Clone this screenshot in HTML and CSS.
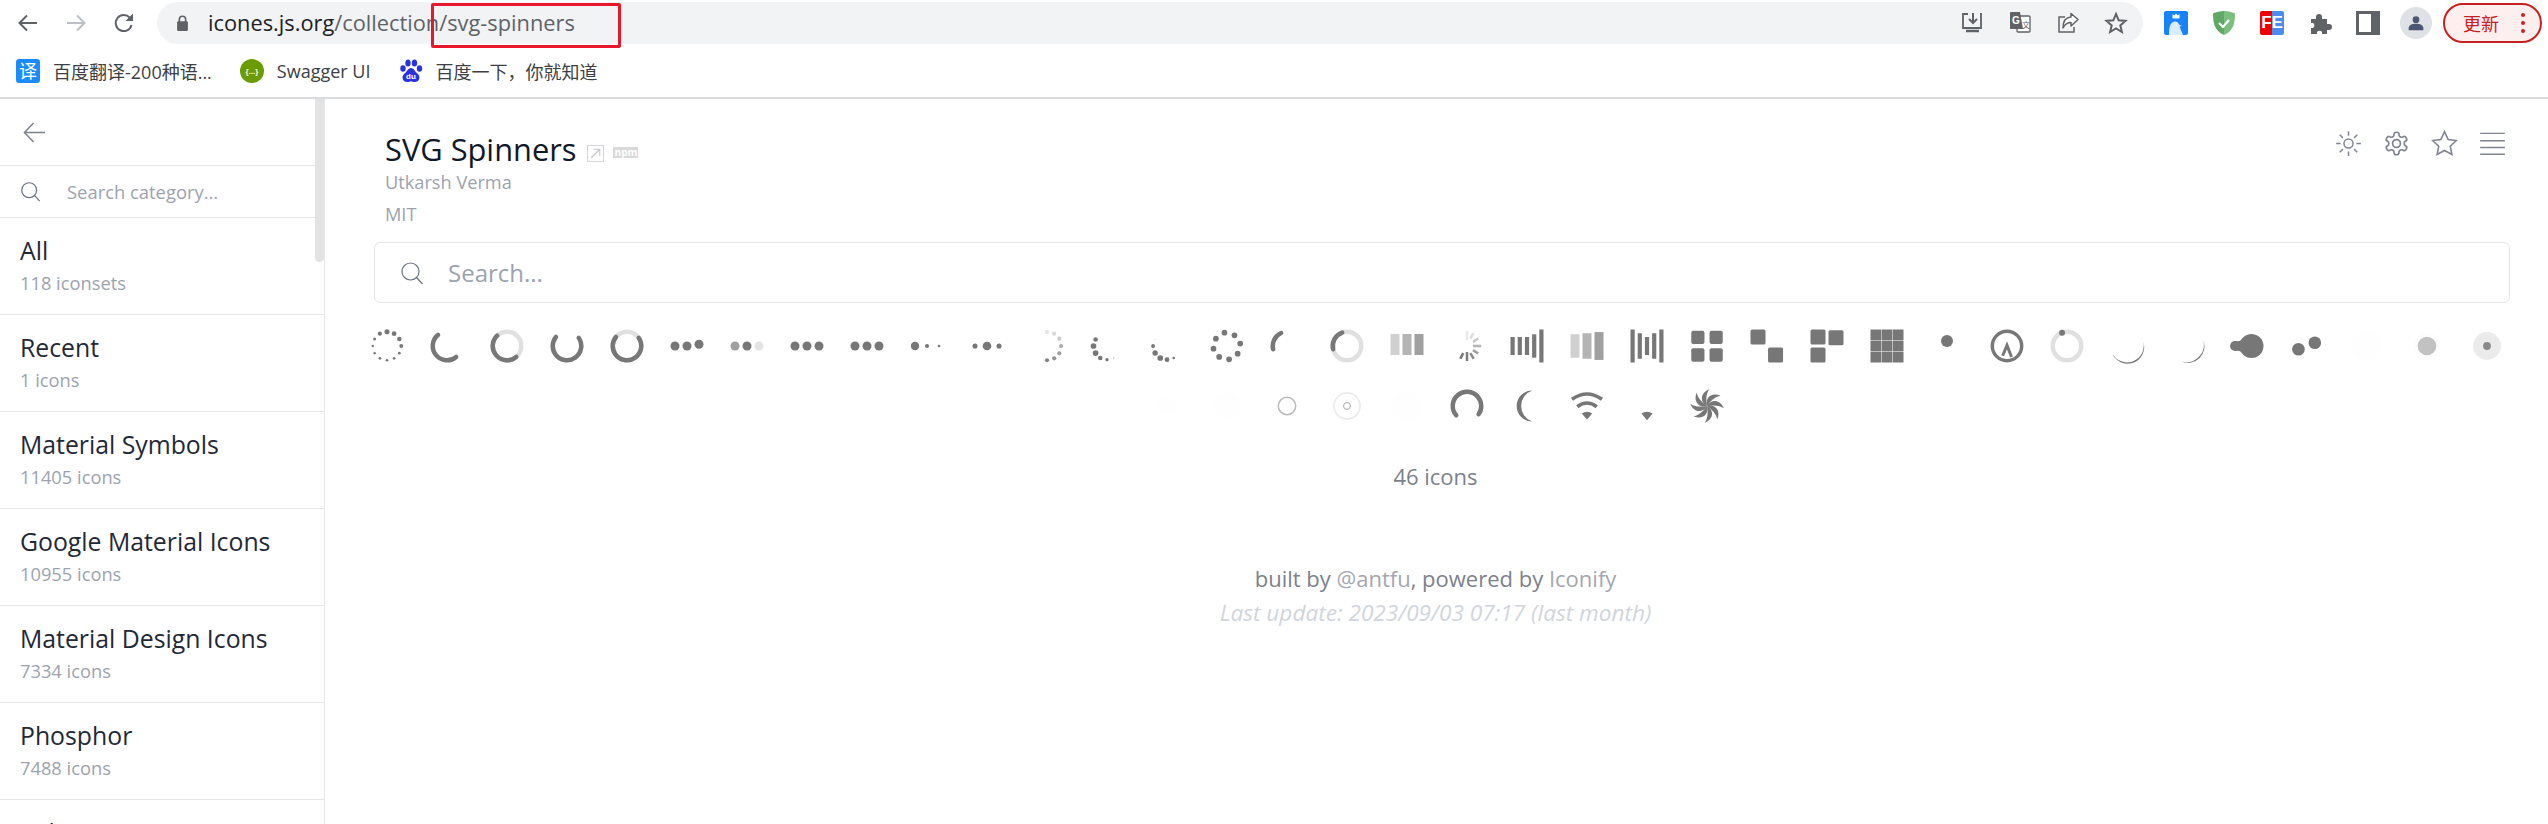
FILE: index.html
```html
<!DOCTYPE html>
<html>
  <head>
    <meta charset="UTF-8">
    <title>SVG Spinners - Icones</title>
    <link rel="stylesheet" href="styles.css">
  </head>
  <body>
    <div class="browser">
      <div class="toolbar">
        <div class="nav">
          <svg class="tool" viewBox="0 0 24 24"><path d="M21 12H4M11 4.5 3.5 12l7.5 7.5" fill="none" stroke="#5f6368" stroke-width="2"/></svg>
          <svg class="tool" viewBox="0 0 24 24"><path d="M3 12h17M13 4.5l7.5 7.5-7.5 7.5" fill="none" stroke="#bcbfc3" stroke-width="2"/></svg>
          <svg class="tool" viewBox="0 0 24 24"><path d="M19.5 14a8 8 0 1 1-1.8-7.3L20 9" fill="none" stroke="#5f6368" stroke-width="2"/><path d="M21 2.5V10h-7.500z" fill="#5f6368"/></svg>
        </div>
        <div class="omnibox">
          <svg class="lock" viewBox="0 0 16 20"><path d="M4.5 9V6a3.5 3.5 0 0 1 7 0v3" fill="none" stroke="#5f6368" stroke-width="1.8"/><rect x="2" y="8" width="12" height="11" rx="1.5" fill="#5f6368"/></svg>
          <span class="url"><b>icones.js.org</b>/collection/svg-spinners</span>
          <div class="omni-actions">
            <svg class="omni-icon" viewBox="0 0 24 24"><path d="M8 3H3v14h18V3h-1" fill="none" stroke="#5f6368" stroke-width="1.8"/><path d="M6 20h13" stroke="#5f6368" stroke-width="2.5"/><path d="M13 2v9M9 8l4 4 4-4" fill="none" stroke="#5f6368" stroke-width="2"/></svg>
            <svg class="omni-icon" viewBox="0 0 24 24"><rect x="9" y="5" width="13" height="16" rx="1" fill="#fff" stroke="#5f6368" stroke-width="1.3"/><path d="M3 1h9l3 17H3a1 1 0 0 1-1-1V2a1 1 0 0 1 1-1z" fill="#5f6368"/><text x="4" y="13" class="g-mark">G</text><text x="14" y="17" class="x-mark">文</text></svg>
            <svg class="omni-icon" viewBox="0 0 24 24"><path d="M9 6H3v15h15v-5" fill="none" stroke="#5f6368" stroke-width="1.5"/><path d="M22 8.5 15 2.5V6C9 6.500 7 11 7 17c2-4 4.500-5.500 8-5.500V15z" fill="#fff" stroke="#5f6368" stroke-width="1.5" stroke-linejoin="round"/></svg>
            <svg class="omni-icon" viewBox="0 0 24 24"><path d="m12 3 2.7 6.3 6.8.6-5.200 4.500 1.600 6.600-5.900-3.500L6.100 21l1.600-6.600-5.200-4.500 6.800-.6z" fill="none" stroke="#5f6368" stroke-width="2"/></svg>
          </div>
        </div>
        <div class="extensions">
          <svg class="ext" viewBox="0 0 24 24"><rect width="24" height="24" rx="2" fill="#1682fb"/><path d="M5 24C5 16 6 11.500 10.500 10.500c2.500-.5 4 1 4.500 3l3 1.500-2.500.5L19 24z" fill="#dcecff"/><path d="M8.500 3l1.700 1.500L12 2.500l1.800 2L15.500 3v4.500h-7z" fill="#fff"/></svg>
          <svg class="ext" viewBox="0 0 24 24"><path d="M12 0c4 0 8 1 11 2.500 0 9-1 17-11 21.500z" fill="#7abf7e"/><path d="M12 0C8 0 4 1 1 2.500 1 11.500 2 19.500 12 24z" fill="#5fa865"/><path d="m7 12 4 4 6-7" fill="none" stroke="#fff" stroke-width="2.200"/></svg>
          <div class="fe">FE</div>
          <svg class="ext" viewBox="0 0 24 24"><path d="M3 8h5V6a3 3 0 0 1 6 0v2h5v5h2a3 3 0 0 1 0 6h-2v4h-5v-2a3 3 0 0 0-5 0v2H3v-6h2a3 3 0 0 0 0-5H3z" fill="#5f6368"/></svg>
          <svg class="ext" viewBox="0 0 24 24"><path fill-rule="evenodd" d="M0 0h24v24H0zM3 3v18h12V3z" fill="#5f6368"/></svg>
          <div class="avatar"><svg viewBox="0 0 24 24"><circle cx="12" cy="7" r="5" fill="#4a5672"/><path d="M1 23v-3c0-5 5-7 11-7s11 2 11 7v3z" fill="#4a5672"/></svg></div>
        </div>
        <div class="update">
          <span>更新</span>
          <i class="dots"><u></u><u></u><u></u></i>
        </div>
      </div>
      <div class="bookmarks">
        <a class="mark"><span class="fav-fanyi">译</span>百度翻译-200种语...</a>
        <a class="mark"><svg class="fav" viewBox="0 0 24 24"><circle cx="12" cy="12" r="12" fill="#6a9c00"/><text x="12" y="15" class="brace">{...}</text></svg>Swagger UI</a>
        <a class="mark"><svg class="fav" viewBox="0 0 24 24"><ellipse cx="4" cy="9.5" rx="2.7" ry="3.3" fill="#2932e1"/><ellipse cx="9" cy="4" rx="2.7" ry="3.5" fill="#2932e1"/><ellipse cx="15.5" cy="4" rx="2.7" ry="3.5" fill="#2932e1"/><ellipse cx="20.5" cy="9.5" rx="2.7" ry="3.3" fill="#2932e1"/><path d="M12 9c3 0 4 4 7 6 3 3 1 8-3 8-2 0-3-.8-4-.8s-2 .8-4 .8c-4 0-6-5-3-8 3-2 4-6 7-6z" fill="#2932e1"/><text x="12" y="20" class="du">du</text></svg>百度一下，你就知道</a>
      </div>
      <div class="annotation"></div>
    </div>

    <div class="page">
      <aside class="side">
        <div class="side-thumb"></div>
        <div class="side-back">
          <svg class="back-arrow" viewBox="0 0 24 24"><path d="M23 12H1.5M11 2 1.5 12l9.500 10" fill="none" stroke="#7b808c" stroke-width="1.5"/></svg>
        </div>
        <div class="side-search">
          <svg class="search-small" viewBox="0 0 24 24"><circle cx="10.5" cy="10.5" r="8.5" fill="none" stroke="#6b7280" stroke-width="1.4"/><path d="m16.5 16.5 6 6.500" stroke="#6b7280" stroke-width="1.4"/></svg>
          <span>Search category...</span>
        </div>
        <div class="item"><div class="item-name">All</div><div class="item-count">118 iconsets</div></div>
        <div class="item"><div class="item-name">Recent</div><div class="item-count">1 icons</div></div>
        <div class="item"><div class="item-name">Material Symbols</div><div class="item-count">11405 icons</div></div>
        <div class="item"><div class="item-name">Google Material Icons</div><div class="item-count">10955 icons</div></div>
        <div class="item"><div class="item-name">Material Design Icons</div><div class="item-count">7334 icons</div></div>
        <div class="item"><div class="item-name">Phosphor</div><div class="item-count">7488 icons</div></div>
        <div class="item"><div class="item-name">Solar</div></div>
      </aside>

      <main class="main">
        <div class="head">
          <div class="head-info">
            <div class="title-row">
              <h1>SVG Spinners</h1>
              <svg class="ext-link" viewBox="0 0 16 16"><rect x=".5" y=".5" width="15" height="15" fill="none" stroke="#d4d6da"/><path d="M4 12 12 4M6 4h6v6" fill="none" stroke="#c4c6cb"/></svg>
              <span class="npm">npm</span>
            </div>
            <div class="author">Utkarsh Verma</div>
            <div class="license">MIT</div>
          </div>
          <div class="head-actions">
            <svg class="action" viewBox="0 0 24 24"><g fill="none" stroke="#80848f" stroke-width="1.3"><circle cx="12" cy="12" r="4"/><path d="M12 1v4M12 19v4M1 12h4M19 12h4M4.200 4.200 7 7M17 17l2.800 2.800M4.200 19.800 7 17M17 7l2.800-2.800"/></g></svg>
            <svg class="action" viewBox="0 0 24 24"><g fill="none" stroke="#80848f" stroke-width="1.5"><path d="M12.220 2h-.44a2 2 0 0 0-2 2v.18a2 2 0 0 1-1 1.730l-.43.25a2 2 0 0 1-2 0l-.15-.08a2 2 0 0 0-2.730.730l-.22.380a2 2 0 0 0 .730 2.730l.15.1a2 2 0 0 1 1 1.720v.51a2 2 0 0 1-1 1.740l-.15.09a2 2 0 0 0-.730 2.730l.22.380a2 2 0 0 0 2.730.730l.15-.08a2 2 0 0 1 2 0l.43.25a2 2 0 0 1 1 1.730V20a2 2 0 0 0 2 2h.44a2 2 0 0 0 2-2v-.18a2 2 0 0 1 1-1.730l.43-.25a2 2 0 0 1 2 0l.15.08a2 2 0 0 0 2.730-.730l.22-.39a2 2 0 0 0-.730-2.730l-.15-.08a2 2 0 0 1-1-1.740v-.5a2 2 0 0 1 1-1.740l.15-.09a2 2 0 0 0 .730-2.730l-.22-.380a2 2 0 0 0-2.730-.730l-.15.08a2 2 0 0 1-2 0l-.43-.25a2 2 0 0 1-1-1.730V4a2 2 0 0 0-2-2z"/><circle cx="12" cy="12" r="3.5"/></g></svg>
            <svg class="action" viewBox="0 0 24 24"><path d="m12 1.500 3.200 6.900 7.300.9-5.400 5.100 1.500 7.400L12 18.200l-6.600 3.600 1.500-7.400-5.400-5.100 7.300-.9z" fill="none" stroke="#80848f" stroke-width="1.4"/></svg>
            <svg class="action" viewBox="0 0 24 24"><path d="M1 3h22M1 9.500h22M1 15.500h22M1 21.500h22" stroke="#80848f" stroke-width="1.3"/></svg>
          </div>
        </div>

        <div class="search-box">
          <svg class="search-big" viewBox="0 0 24 24"><circle cx="10.5" cy="10.5" r="8.5" fill="none" stroke="#6b7280" stroke-width="1.2"/><path d="m16.5 16.5 6 6.500" stroke="#6b7280" stroke-width="1.2"/></svg>
          <span>Search...</span>
        </div>

        <div class="icon-grid">
          <div class="cell"><svg class="spin" viewBox="0 0 24 24"><circle cx="12" cy="2.5" r="1.7"/><circle cx="16.75" cy="3.77" r="1.6"/><circle cx="20.23" cy="7.25" r="1.5"/><circle cx="21.5" cy="12" r="1.3"/><circle cx="20.23" cy="16.75" r=".9"/><circle cx="16.75" cy="20.23" r=".9"/><circle cx="12" cy="21.5" r=".9"/><circle cx="7.25" cy="20.23" r=".9"/><circle cx="3.77" cy="16.75" r=".8"/><circle cx="2.5" cy="12" r=".8"/><circle cx="3.77" cy="7.25" r="1"/><circle cx="7.25" cy="3.77" r="1.4"/></svg></div>
          <div class="cell"><svg class="spin" viewBox="0 0 24 24"><circle class="arc" cx="12" cy="12" r="9.5" pathLength="360" stroke-dasharray="181 360" transform="rotate(50 12 12)"/></svg></div>
          <div class="cell"><svg class="spin" viewBox="0 0 24 24"><circle class="ring" cx="12" cy="12" r="9.5"/><circle class="arc" cx="12" cy="12" r="9.5" pathLength="360" stroke-dasharray="176 360" transform="rotate(50 12 12)"/></svg></div>
          <div class="cell"><svg class="spin" viewBox="0 0 24 24"><circle class="arc" cx="12" cy="12" r="9.5" pathLength="360" stroke-dasharray="254 360" transform="rotate(-35 12 12)"/></svg></div>
          <div class="cell"><svg class="spin" viewBox="0 0 24 24"><circle class="ring" cx="12" cy="12" r="9.5"/><circle class="arc" cx="12" cy="12" r="9.5" pathLength="360" stroke-dasharray="254 360" transform="rotate(-35 12 12)"/></svg></div>
          <div class="cell"><svg class="spin" viewBox="0 0 24 24"><circle cx="4" cy="12" r="3"/><circle cx="12" cy="12" r="3"/><circle cx="20" cy="10.8" r="3"/></svg></div>
          <div class="cell"><svg class="spin" viewBox="0 0 24 24"><circle cx="4" cy="12" r="3" opacity=".7"/><circle cx="12" cy="12" r="3"/><circle cx="20" cy="12" r="3" opacity=".2"/></svg></div>
          <div class="cell"><svg class="spin" viewBox="0 0 24 24"><circle cx="4" cy="12" r="3"/><circle cx="12" cy="12" r="3"/><circle cx="20" cy="12" r="3"/></svg></div>
          <div class="cell"><svg class="spin" viewBox="0 0 24 24"><circle cx="4" cy="12" r="3"/><circle cx="12" cy="12" r="3"/><circle cx="20" cy="12" r="3"/></svg></div>
          <div class="cell"><svg class="spin" viewBox="0 0 24 24"><circle cx="4" cy="12" r="2.8"/><circle cx="12" cy="12" r="1.4"/><circle cx="20" cy="12" r=".9"/></svg></div>
          <div class="cell"><svg class="spin" viewBox="0 0 24 24"><circle cx="4" cy="12" r="1.7"/><circle cx="12" cy="12" r="2.9"/><circle cx="20" cy="12" r="1.7"/></svg></div>
          <div class="cell"><svg class="spin" viewBox="0 0 24 24"><circle cx="12" cy="2.7" r="1.4" opacity=".2"/><circle cx="16.8" cy="3.8" r="1.4" opacity=".3"/><circle cx="20.2" cy="7.1" r="1.4" opacity=".4"/><circle cx="21.4" cy="12" r="1.4" opacity=".6"/><circle cx="20.2" cy="16.9" r="1.4" opacity=".7"/><circle cx="16.8" cy="20.2" r="1.4" opacity=".8"/><circle cx="12" cy="21.5" r="1.4" opacity=".9"/></svg></div>
          <div class="cell"><svg class="spin" viewBox="0 0 24 24"><circle cx="4.4" cy="7.6" r="1.5"/><circle cx="3" cy="12" r="1.9"/><circle cx="4.4" cy="16.7" r="1.9"/><circle cx="7.5" cy="20" r="1.5"/><circle cx="12" cy="21.1" r="1.1"/><circle cx="16.5" cy="20" r=".4"/></svg></div>
          <div class="cell"><svg class="spin" viewBox="0 0 24 24"><circle cx="4.1" cy="7.6" r=".2"/><circle cx="2.7" cy="12" r="1.3"/><circle cx="4.1" cy="16.7" r="1.8"/><circle cx="7.5" cy="20" r="1.9"/><circle cx="12" cy="21.1" r="1.6"/><circle cx="16.5" cy="20" r=".9"/></svg></div>
          <div class="cell"><svg class="spin" viewBox="0 0 24 24"><circle cx="10.3" cy="3.1" r="1.9"/><circle cx="17" cy="4.9" r="1.9"/><circle cx="20.8" cy="10.4" r="1.9"/><circle cx="19.1" cy="17.1" r="1.9"/><circle cx="13.4" cy="20.9" r="1.9"/><circle cx="6.8" cy="19.3" r="1.9"/><circle cx="3" cy="13.8" r="1.9"/><circle cx="4.6" cy="7.1" r="1.9"/></svg></div>
          <div class="cell"><svg class="spin" viewBox="0 0 24 24"><circle class="arc" cx="12" cy="12" r="9.5" pathLength="360" stroke-dasharray="78 360" transform="rotate(167 12 12)"/></svg></div>
          <div class="cell"><svg class="spin" viewBox="0 0 24 24"><circle class="ring" cx="12" cy="12" r="9.5"/><circle class="arc" cx="12" cy="12" r="9.5" pathLength="360" stroke-dasharray="83 360" transform="rotate(167 12 12)"/></svg></div>
          <div class="cell"><svg class="spin" viewBox="0 0 24 24"><rect x="1" y="4" width="6" height="14" opacity=".35"/><rect x="9" y="4" width="6" height="14" opacity=".55"/><rect x="17" y="4" width="6" height="14" opacity=".7"/></svg></div>
          <div class="cell"><svg class="spin" viewBox="0 0 24 24"><g stroke="#777" stroke-width="1.7"><path d="M12 2v6" opacity=".15"/><path d="m16.2 3.5-2 3.6" opacity=".25"/><path d="m19.5 7-3.5 2.2" opacity=".4"/><path d="M21.5 12H16" opacity=".55"/><path d="m19.5 17-3.5-2.2" opacity=".7"/><path d="m16.5 20.5-2.3-3.8" opacity=".85"/><path d="M12 22v-6" opacity=".95"/><path d="m7.5 20.5 2-3.8"/></g></svg></div>
          <div class="cell"><svg class="spin" viewBox="0 0 24 24"><rect x="1" y="6" width="2.8" height="12"/><rect x="5.8" y="6" width="2.8" height="12"/><rect x="10.6" y="6" width="2.8" height="12"/><rect x="15.4" y="4.2" width="2.8" height="15.6"/><rect x="20.2" y="1" width="2.8" height="22"/></svg></div>
          <div class="cell"><svg class="spin" viewBox="0 0 24 24"><rect x="1" y="4.2" width="6" height="15.6" opacity=".35"/><rect x="9" y="3.5" width="6" height="17" opacity=".55"/><rect x="17" y="2.7" width="6" height="18.6" opacity=".7"/></svg></div>
          <div class="cell"><svg class="spin" viewBox="0 0 24 24"><rect x="1" y="1" width="2.8" height="22"/><rect x="5.8" y="3.5" width="2.8" height="17"/><rect x="10.6" y="6" width="2.8" height="12"/><rect x="15.4" y="3.5" width="2.8" height="17"/><rect x="20.2" y="1" width="2.8" height="22"/></svg></div>
          <div class="cell"><svg class="spin" viewBox="0 0 24 24"><rect x="1.5" y="1.8" width="8.8" height="8.8" rx="1.3"/><rect x="13.7" y="1.8" width="8.8" height="8.8" rx="1.3"/><rect x="1.5" y="13.5" width="8.8" height="9" rx="1.3"/><rect x="13.7" y="13.5" width="8.8" height="9" rx="1.3"/></svg></div>
          <div class="cell"><svg class="spin" viewBox="0 0 24 24"><rect x="1" y="1" width="10" height="10" rx="1"/><rect x="12.7" y="13" width="10" height="10" rx="1"/></svg></div>
          <div class="cell"><svg class="spin" viewBox="0 0 24 24"><rect x="1" y="1" width="10" height="10" rx="1"/><rect x="13" y="1.5" width="10" height="10" rx="1"/><rect x="1" y="13" width="10" height="10" rx="1"/></svg></div>
          <div class="cell"><svg class="spin" viewBox="0 0 24 24"><rect x="1" y="1" width="7.13" height="7.13"/><rect x="8.43" y="1" width="7.13" height="7.13"/><rect x="15.87" y="1" width="7.13" height="7.13"/><rect x="1" y="8.43" width="7.13" height="7.13"/><rect x="8.43" y="8.43" width="7.13" height="7.13"/><rect x="15.87" y="8.43" width="7.13" height="7.13"/><rect x="1" y="15.87" width="7.13" height="7.13"/><rect x="8.43" y="15.87" width="7.13" height="7.13"/><rect x="15.87" y="15.87" width="7.13" height="7.13"/></svg></div>
          <div class="cell"><svg class="spin" viewBox="0 0 24 24"><circle cx="12" cy="8.7" r="4"/></svg></div>
          <div class="cell"><svg class="spin" viewBox="0 0 24 24"><circle cx="12" cy="12" r="9.8" fill="none" stroke="#777" stroke-width="2.3"/><path d="m9.1 18.5 2.9-7 3 7.8" fill="none" stroke="#777" stroke-width="2"/></svg></div>
          <div class="cell"><svg class="spin" viewBox="0 0 24 24"><circle class="ring" cx="12" cy="12" r="9.5"/><circle cx="8.7" cy="3.1" r="2"/></svg></div>
          <div class="cell"><svg class="spin" viewBox="0 0 24 24"><path d="M22.8 9A11 11 0 0 1 2 16.5 11.1 11.1 0 0 0 22.8 9z"/></svg></div>
          <div class="cell"><svg class="spin" viewBox="0 0 24 24"><path d="M22.8 8A11 11 0 0 1 8.5 22.4 11.7 11.7 0 0 0 22.8 8z"/></svg></div>
          <div class="cell"><svg class="spin" viewBox="0 0 24 24"><circle cx="15" cy="12" r="8"/><circle cx="4" cy="12" r="3.3"/><path d="M4 8.700Q8 9.500 10 6v12q-2-3.500-6-2.700z"/></svg></div>
          <div class="cell"><svg class="spin" viewBox="0 0 24 24"><circle cx="6.3" cy="14.2" r="4.2"/><circle cx="17.2" cy="9.8" r="4.2"/></svg></div>
          <div class="cell"><svg class="spin faint" viewBox="0 0 24 24"><circle cx="12" cy="12" r="10"/></svg></div>
          <div class="cell"><svg class="spin" viewBox="0 0 24 24"><circle cx="12" cy="12" r="9" fill="#fdfdfd"/><circle cx="12" cy="12" r="6.2" fill="#c2c2c2"/></svg></div>
          <div class="cell"><svg class="spin" viewBox="0 0 24 24"><circle cx="12" cy="12" r="9.3" fill="#ebebeb"/><circle cx="12" cy="12" r="2.6" fill="#8a8a8a"/></svg></div>

          <div class="cell"><svg class="spin faint" viewBox="0 0 24 24"><circle cx="12" cy="12" r="6"/></svg></div>
          <div class="cell"><svg class="spin faint" viewBox="0 0 24 24"><circle cx="12" cy="12" r="9"/></svg></div>
          <div class="cell"><svg class="spin" viewBox="0 0 24 24"><circle cx="12" cy="12" r="5.8" fill="none" stroke="#bbb"/></svg></div>
          <div class="cell"><svg class="spin" viewBox="0 0 24 24"><circle cx="12" cy="12" r="8.7" fill="none" stroke="#ececec" stroke-width="1.2"/><circle cx="12" cy="12" r="2.3" fill="none" stroke="#888" stroke-width=".5"/></svg></div>
          <div class="cell"><svg class="spin faint" viewBox="0 0 24 24"><circle cx="12" cy="12" r="10"/></svg></div>
          <div class="cell"><svg class="spin" viewBox="0 0 24 24"><circle class="arc" cx="12" cy="12" r="9.5" pathLength="360" stroke-dasharray="256 360" transform="rotate(139 12 12)"/></svg></div>
          <div class="cell"><svg class="spin" viewBox="0 0 24 24"><path d="M15.5 1.6A11 11 0 0 0 15.5 22.4 10.4 10.4 0 0 1 15.5 1.6z"/></svg></div>
          <div class="cell"><svg class="spin" viewBox="0 0 24 24"><path d="M2 7.500Q12 .5 22 7.500M5.500 12.500Q12 7.500 18.500 12.500" fill="none" stroke="#777" stroke-width="2.4"/><path d="M12 21 8.500 17Q12 14.500 15.500 17z"/></svg></div>
          <div class="cell"><svg class="spin" viewBox="0 0 24 24"><path d="M12 21.500 8.300 17Q12 14.800 15.700 17z"/></svg></div>
          <div class="cell"><svg class="spin" viewBox="0 0 24 24"><path d="M12 12C7.500 9.500 7 3.500 13.500 .8 11 4.500 11.500 8.500 12 12z"/><path d="M12 12C7.500 9.500 7 3.500 13.500 .8 11 4.500 11.500 8.500 12 12z" transform="rotate(45 12 12)"/><path d="M12 12C7.500 9.500 7 3.500 13.500 .8 11 4.500 11.500 8.500 12 12z" transform="rotate(90 12 12)"/><path d="M12 12C7.500 9.500 7 3.500 13.500 .8 11 4.500 11.500 8.500 12 12z" transform="rotate(135 12 12)"/><path d="M12 12C7.500 9.500 7 3.500 13.500 .8 11 4.500 11.500 8.500 12 12z" transform="rotate(180 12 12)"/><path d="M12 12C7.500 9.500 7 3.500 13.500 .8 11 4.500 11.500 8.500 12 12z" transform="rotate(225 12 12)"/><path d="M12 12C7.500 9.500 7 3.500 13.500 .8 11 4.500 11.500 8.500 12 12z" transform="rotate(270 12 12)"/><path d="M12 12C7.500 9.500 7 3.500 13.500 .8 11 4.500 11.500 8.500 12 12z" transform="rotate(315 12 12)"/></svg></div>
        </div>

        <div class="count">46 icons</div>
        <div class="footer">built by <a>@antfu</a>, powered by <a>Iconify</a></div>
        <div class="updated">Last update: 2023/09/03 07:17 (last month)</div>
      </main>
    </div>
  </body>
</html>
```

FILE: styles.css
```css
* {
  box-sizing: border-box;
}

html, body {
  margin: 0;
  height: 824px;
  overflow: hidden;
}

body {
  font-family: "Open Sans", "Noto Sans CJK SC", sans-serif;
  background: #fff;
  color: #111827;
  display: flex;
  flex-direction: column;
}

/* browser window */
.browser {
  position: relative;
  height: 99px;
  flex-shrink: 0;
  border-bottom: 2px solid #dadce0;
}

.toolbar {
  display: flex;
  align-items: center;
  height: 44px;
  padding: 1px 0 0 4px;
}

.nav {
  display: flex;
}

.tool {
  width: 24px;
  height: 24px;
  margin: 0 12px;
}

.omnibox {
  display: flex;
  align-items: center;
  width: 1986px;
  height: 42px;
  margin-left: 9px;
  padding: 0 3px 0 18px;
  background: #f1f3f4;
  border-radius: 21px;
}

.lock {
  width: 15px;
  height: 18px;
  margin-right: 18px;
}

.url {
  font-size: 21.8px;
  color: #5f6368;
  white-space: nowrap;
}

.url b {
  font-weight: 400;
  color: #202124;
}

.omni-actions {
  display: flex;
  margin-left: auto;
}

.omni-icon {
  width: 24px;
  height: 24px;
  margin: 0 12px;
}

.g-mark {
  font: 700 10px "Liberation Sans", sans-serif;
  fill: #fff;
}

.x-mark {
  font: 8px "Noto Sans CJK SC", sans-serif;
  fill: #5f6368;
}

.extensions {
  display: flex;
  align-items: center;
  margin-left: 9px;
}

.ext {
  width: 24px;
  height: 24px;
  margin: 0 12px;
}

.fe {
  width: 24px;
  height: 24px;
  margin: 0 12px;
  font: 700 17px/24px "Liberation Sans", sans-serif;
  text-align: center;
  color: #fff;
  background: linear-gradient(90deg, #f00000 50%, #4a8cf0 50%);
  border-radius: 2px;
}

.avatar {
  width: 32px;
  height: 32px;
  margin: 0 8px;
  padding: 8px;
  border-radius: 50%;
  background: #dee1e6;
}

.avatar svg {
  display: block;
}

.update {
  display: flex;
  align-items: center;
  width: 99px;
  height: 40px;
  margin-left: 3px;
  padding-left: 18px;
  font-size: 18px;
  color: #c5221f;
  background: #fcefed;
  border: 2px solid #c5221f;
  border-radius: 20px;
}

.dots {
  display: flex;
  flex-direction: column;
  gap: 4px;
  margin-left: 22px;
}

.dots u {
  display: block;
  width: 4px;
  height: 4px;
  border-radius: 50%;
  background: #c5221f;
}

.bookmarks {
  display: flex;
  align-items: center;
  gap: 28px;
  height: 53px;
  padding-left: 16px;
}

.mark {
  display: flex;
  align-items: center;
  gap: 13px;
  font-size: 18px;
  color: #3c4043;
}

.fav {
  width: 24px;
  height: 24px;
}

.fav-fanyi {
  width: 24px;
  height: 24px;
  font-size: 18px;
  line-height: 24px;
  text-align: center;
  color: #fff;
  background: #1a8cff;
  border-radius: 3px;
}

.brace {
  font: 700 8px "Liberation Sans", sans-serif;
  fill: #fff;
  text-anchor: middle;
}

.du {
  font: 700 8px "Liberation Sans", sans-serif;
  fill: #fff;
  text-anchor: middle;
}

/* red box somebody drew over the address bar */
.annotation {
  position: absolute;
  left: 431px;
  top: 3px;
  width: 190px;
  height: 45px;
  border: 3px solid #e8172c;
  border-radius: 2px;
}

/* page */
.page {
  display: flex;
  flex: 1;
  min-height: 0;
}

.side {
  position: relative;
  flex-shrink: 0;
  width: 325px;
  overflow: hidden;
  border-right: 1px solid #e5e7eb;
}

.side-thumb {
  position: absolute;
  top: 0;
  right: 0;
  width: 9px;
  height: 163px;
  background: #e3e3e3;
  border-radius: 0 0 5px 5px;
}

.side-back {
  display: flex;
  align-items: center;
  height: 67px;
  padding-left: 23px;
  border-bottom: 1px solid #e5e7eb;
}

.back-arrow {
  width: 23px;
  height: 23px;
}

.side-search {
  display: flex;
  align-items: center;
  height: 52px;
  padding-left: 20px;
  font-size: 18.4px;
  color: #9ca3af;
  border-bottom: 1px solid #e5e7eb;
}

.search-small {
  width: 21px;
  height: 21px;
  margin-right: 26px;
}

.item {
  height: 97px;
  padding: 14px 0 0 20px;
  border-bottom: 1px solid #e5e7eb;
}

.item-name {
  font-size: 24.8px;
  line-height: 36px;
  color: #1f2937;
}

.item-count {
  font-size: 18.3px;
  line-height: 30px;
  color: #9ca3af;
}

.main {
  flex: 1;
  min-width: 0;
}

.head {
  display: flex;
  justify-content: space-between;
  margin: 0 38px 0 49px;
  padding: 28px 4px 0 11px;
}

.title-row {
  display: flex;
  align-items: center;
  height: 44px;
}

h1 {
  margin: 0;
  font-size: 30.8px;
  font-weight: 400;
  color: #111827;
}

.ext-link {
  width: 17px;
  height: 17px;
  margin: 8px 0 0 11px;
}

.npm {
  width: 25px;
  margin: 6px 0 0 9px;
  font-size: 10px;
  font-weight: 700;
  line-height: 11px;
  text-align: center;
  color: #fff;
  background: #d9d9d9;
}

.author,
.license {
  font-size: 18.2px;
  line-height: 22px;
  color: #9ca3af;
}

.license {
  margin-top: 10px;
}

.head-actions {
  display: flex;
  gap: 21px;
  padding-top: 3px;
}

.action {
  width: 27px;
  height: 27px;
}

.search-box {
  display: flex;
  align-items: center;
  height: 61px;
  margin: 17px 38px 0 49px;
  padding-left: 25px;
  font-size: 24px;
  color: #9ca3af;
  border: 1px solid #e5e7eb;
  border-radius: 6px;
}

.search-big {
  width: 24px;
  height: 24px;
  margin-right: 24px;
}

.icon-grid {
  display: flex;
  flex-wrap: wrap;
  justify-content: center;
  width: 2180px;
  margin: 13px 0 0 22px;
}

.cell {
  display: flex;
  align-items: center;
  justify-content: center;
  width: 60px;
  height: 60px;
}

.spin {
  width: 36px;
  height: 36px;
  fill: #777;
}

.spin.faint {
  fill: #fefefe;
}

.arc {
  fill: none;
  stroke: #777;
  stroke-width: 3;
  stroke-linecap: round;
}

.ring {
  fill: none;
  stroke: #e0e0e0;
  stroke-width: 3;
}

.count {
  margin: 25px 0 0 -2px;
  font-size: 22px;
  line-height: 30px;
  text-align: center;
  color: #7c818c;
}

.footer {
  margin: 72px 0 0 -2px;
  font-size: 22px;
  line-height: 30px;
  text-align: center;
  color: #7c818c;
}

.footer a {
  color: #a3a7b0;
}

.updated {
  margin: 5px 0 0 -2px;
  font-size: 22.6px;
  font-style: italic;
  line-height: 30px;
  text-align: center;
  color: #d1d5db;
}
```
